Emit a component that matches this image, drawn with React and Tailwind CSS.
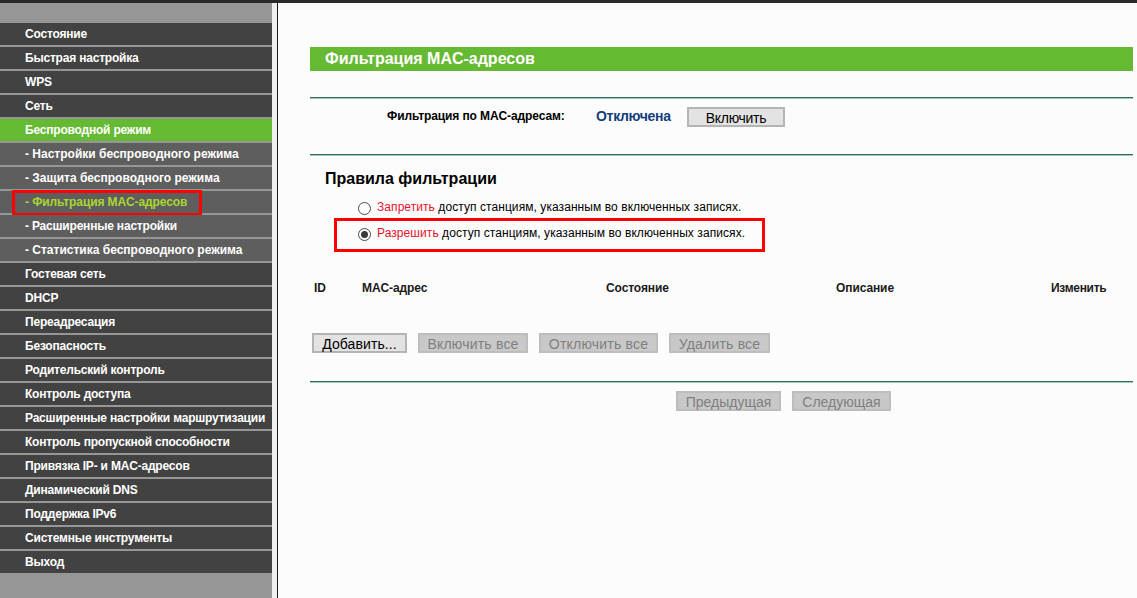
import React from 'react';

const FONT = "font-['Liberation_Sans',Arial,sans-serif]";

const MENU = [
  { label: 'Состояние' },
  { label: 'Быстрая настройка' },
  { label: 'WPS' },
  { label: 'Сеть' },
  { label: 'Беспроводной режим', active: true },
  { label: '- Настройки беспроводного режима', sub: true },
  { label: '- Защита беспроводного режима', sub: true },
  { label: '- Фильтрация MAC-адресов', sub: true, current: true },
  { label: '- Расширенные настройки', sub: true, tight: true },
  { label: '- Статистика беспроводного режима', sub: true },
  { label: 'Гостевая сеть' },
  { label: 'DHCP' },
  { label: 'Переадресация' },
  { label: 'Безопасность' },
  { label: 'Родительский контроль' },
  { label: 'Контроль доступа' },
  { label: 'Расширенные настройки маршрутизации' },
  { label: 'Контроль пропускной способности' },
  { label: 'Привязка IP- и MAC-адресов' },
  { label: 'Динамический DNS' },
  { label: 'Поддержка IPv6' },
  { label: 'Системные инструменты' },
  { label: 'Выход' },
];

function MenuItem({ item }) {
  let bg = 'bg-[#424242]';
  if (item.active) bg = 'bg-[#66b933]';
  if (item.sub) bg = 'bg-[#5e5e5e]';
  const spacing = !item.sub || item.tight ? 'tracking-[-0.2px]' : item.current ? 'tracking-[-0.1px]' : '';
  return (
    <div className={`relative h-[22px] mb-[2px] pl-[25px] flex items-center text-[12px] font-bold whitespace-nowrap ${bg} ${spacing} ${item.current ? 'text-[#a9d62f]' : 'text-white'}`}>
      {item.label}
      {item.current && <div className="absolute left-[12px] top-[-1px] w-[190px] h-[26px] border-[3px] border-[#ff0000]" />}
    </div>
  );
}

function Btn({ children, disabled, className = '' }) {
  return (
    <div className={`h-[20px] pt-[2px] flex items-center justify-center text-[14px] border-2 ${disabled ? 'bg-[#c8c8c8] border-[#bdbdbd] text-[#7f7f7f]' : 'bg-[#e3e3e3] border-[#b4b4b4] text-black'} ${className}`}>
      {children}
    </div>
  );
}

function Rule() {
  return <div className="h-[2px] shrink-0 border-t border-t-[#2f6f54] border-b border-b-[#a9c6ba]" />;
}

function Radio({ checked }) {
  return (
    <div className="w-[13px] h-[13px] mt-[3px] rounded-full border border-[#4a4a4a] bg-white flex items-center justify-center shrink-0">
      {checked && <div className="w-[7px] h-[7px] rounded-full bg-[#3a3a3a]" />}
    </div>
  );
}

export default function App() {
  return (
    <div className={`${FONT} w-[1137px] h-[598px] overflow-hidden flex flex-col bg-[#fcfcfc]`}>
      <div className="h-[3px] shrink-0 bg-[#2a2a2a]" />
      <div className="flex flex-1 min-h-0">
        <div className="w-[272px] shrink-0 bg-[#969696] pt-[20px]">
          {MENU.map(item => <MenuItem key={item.label} item={item} />)}
        </div>
        <div className="w-[5px] shrink-0 bg-[#f0f0f0]" />
        <div className="w-[1px] shrink-0 bg-[#1c1c1c]" />
        <div className="flex-1 pl-[32px] pr-[4px] pt-[44px] flex flex-col">
          <div className="h-[24px] bg-[#66b933] pl-[15px] flex items-center text-white font-bold text-[16px]">
            Фильтрация MAC-адресов
          </div>
          <div className="mt-[26px]"><Rule /></div>
          <div className="mt-[8px] h-[20px] flex items-center">
            <span className="ml-[77px] w-[209px] pb-[2px] text-[12px] font-bold tracking-[-0.1px] text-black">Фильтрация по MAC-адресам:</span>
            <span className="w-[91px] pb-[2px] text-[14px] font-bold tracking-[-0.3px] text-[#143f7c]">Отключена</span>
            <Btn className="w-[98px] tracking-[-0.3px]">Включить</Btn>
          </div>
          <div className="mt-[27px]"><Rule /></div>
          <div className="mt-[13px] pl-[15px] text-[16px] font-bold text-black leading-[20px]">Правила фильтрации</div>
          <div className="mt-[9px] pl-[48px] flex items-center gap-[6px] h-[18px] text-[12px] tracking-[0.07px] text-black">
            <Radio />
            <span><span className="text-[#e8112d]">Запретить</span> доступ станциям, указанным во включенных записях.</span>
          </div>
          <div className="relative mt-[8px] pl-[48px] flex items-center gap-[6px] h-[18px] text-[12px] tracking-[0.07px] text-black">
            <Radio checked />
            <span><span className="text-[#e8112d]">Разрешить</span> доступ станциям, указанным во включенных записях.</span>
            <div className="absolute left-[24px] top-[-6px] w-[431px] h-[34px] border-[3px] border-[#ff0000]" />
          </div>
          <div className="mt-[38px] h-[16px] relative flex items-center text-[12px] font-bold tracking-[-0.1px] text-[#1a1a1a]">
            <span className="w-[52px] pl-[4px]">ID</span>
            <span className="w-[244px]">MAC-адрес</span>
            <span className="w-[230px]">Состояние</span>
            <span className="w-[215px]">Описание</span>
            <span className="tracking-[-0.3px]">Изменить</span>
          </div>
          <div className="mt-[37px] pl-[2px] flex gap-[11px]">
            <Btn className="w-[95px] tracking-[0.1px]">Добавить...</Btn>
            <Btn disabled className="w-[110px] tracking-[0.2px]">Включить все</Btn>
            <Btn disabled className="w-[119px] tracking-[0.2px]">Отключить все</Btn>
            <Btn disabled className="w-[101px] tracking-[0.2px]">Удалить все</Btn>
          </div>
          <div className="mt-[28px]"><Rule /></div>
          <div className="mt-[8px] pl-[366px] flex gap-[11px]">
            <Btn disabled className="w-[105px]">Предыдущая</Btn>
            <Btn disabled className="w-[99px]">Следующая</Btn>
          </div>
        </div>
      </div>
    </div>
  );
}
